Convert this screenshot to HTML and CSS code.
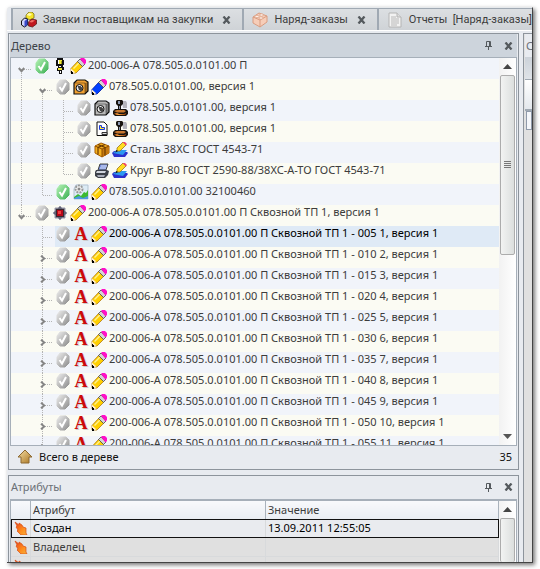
FILE: index.html
```
<!DOCTYPE html>
<html lang="ru">
<head>
<meta charset="utf-8">
<title>Дерево</title>
<link rel="stylesheet" href="styles.css">
</head>
<body>
<svg class="defs" aria-hidden="true">
  <defs>
    <linearGradient id="gGray" x1="0" y1="0" x2="1" y2="1"><stop offset="0" stop-color="#ececec"/><stop offset=".5" stop-color="#bcbcbc"/><stop offset="1" stop-color="#8c8c8c"/></linearGradient>
    <linearGradient id="gGreen" x1="0" y1="0" x2="1" y2="1"><stop offset="0" stop-color="#b4f2b4"/><stop offset="1" stop-color="#3cb054"/></linearGradient>
    <linearGradient id="gUp" x1="0" y1="0" x2="1" y2="1"><stop offset="0" stop-color="#f6dfa6"/><stop offset="1" stop-color="#a87420"/></linearGradient>
    <linearGradient id="gHand" x1="0" y1="0" x2="1" y2="1"><stop offset="0" stop-color="#e8401c"/><stop offset=".6" stop-color="#ff8c1c"/><stop offset="1" stop-color="#f4b040"/></linearGradient>
    <linearGradient id="gBase" x1="0" y1="0" x2="1" y2="0"><stop offset="0" stop-color="#7c3000"/><stop offset=".35" stop-color="#f8a040"/><stop offset="1" stop-color="#8c3800"/></linearGradient>
  </defs>
  <symbol id="ok" viewBox="0 0 16 16"><path d="M5 1h6l3 3v7l-4 4H5l-3-3V5z" fill="url(#gGray)" stroke="url(#gGray)" stroke-linejoin="round"/><path d="M4.500 8l2.500 3.500L11 4" fill="none" stroke="#fff" stroke-width="2"/></symbol>
  <symbol id="okg" viewBox="0 0 16 16"><path d="M5 1h6l3 3v7l-4 4H5l-3-3V5z" fill="url(#gGreen)" stroke="url(#gGreen)" stroke-linejoin="round"/><path d="M4.500 8l2.500 3.500L11 4" fill="none" stroke="#fff" stroke-width="2"/></symbol>
  <symbol id="pen" viewBox="0 0 16 16"><path d="M1 15v-4.500L8 3l5 5-7 7z" fill="#ffd000" stroke="#b07818" stroke-width=".8"/><path d="M3 10l6-6 1 1-6 6z" fill="#fff08c"/><path d="M1 10.500L5.500 14.500 1 15.500z" fill="#ffeccc"/><path d="M1 13h1v1h1v2H1z" fill="#000"/><path d="M7.500 3.500L10 1l5 5-2.500 2.500z" fill="#d4d4d4" stroke="#444" stroke-width=".8"/><path d="M10 1l1-1h3l2 2v3l-1.500 1.500z" fill="#ff10c8"/></symbol>
  <symbol id="penb" viewBox="0 0 16 16"><path d="M1 15v-4.500L8 3l5 5-7 7z" fill="#0040ff" stroke="#0018a0" stroke-width=".8"/><path d="M1 10.500L5.500 14.500 1 15.500z" fill="#ffeccc"/><path d="M1 13h1v1h1v2H1z" fill="#000"/><path d="M7.500 3.500L10 1l5 5-2.500 2.500z" fill="#d4d4d4" stroke="#444" stroke-width=".8"/><path d="M10 1l1-1h3l2 2v3l-1.500 1.500z" fill="#ff10c8"/></symbol>
  <symbol id="lamp" viewBox="0 0 16 16"><path d="M5 0h6v2h1v5h-1v2h1v3h-2v4H7v-3H5v-3h1V8H4V2h1z" fill="#111"/><path d="M6 2h4v4H6zM6 10h4v2H6z" fill="#f0e838"/><path d="M6 2h1v4H6zM7 8h2v1H7zM8 13h1v2H8z" fill="#fff"/><path d="M9 3h1v3H9z" fill="#a09810"/></symbol>
  <symbol id="nut" viewBox="0 0 16 16"><path d="M1 4l3-3h8l3 2v9l-3 3H1z" fill="currentColor" stroke="#111" stroke-width="1.200"/><path d="M12 4l3-1v9l-3 3z" fill="#000" opacity=".3"/><path d="M1.500 4H12v11" fill="none" stroke="#111" stroke-width=".8" opacity=".5"/><circle cx="6.500" cy="9" r="3.500" fill="#eee" stroke="#111"/><path d="M4.500 7h3l2 2v1l-1.500 2-2-1z" fill="#444"/></symbol>
  <symbol id="stamp" viewBox="0 0 16 16"><path d="M10 1h4l1 2v5h-4z" fill="#b4b4bc"/><path d="M5 0h5l1 1v3L9 6v3h5l2 2v3l-2 2H3l-2-2v-3l2-2h3V6L4 4V1z" fill="#181410"/><path d="M6 1h2v3H6zM7 6h1v3H7z" fill="#8c98b0"/><path d="M2 11l3-1h7l2 1-2 1.500H5z" fill="#c87830"/><path d="M2 13h3l2 1h5l2-1v1l-1 1H4z" fill="url(#gBase)"/></symbol>
  <symbol id="doc" viewBox="0 0 16 16"><path d="M3 1h7l3 3v10.500H3z" fill="#fff" stroke="#111"/><path d="M5.500 8.500v-4h2v2h3v2z" fill="#ffe838" stroke="#1838e0"/><path d="M8 11.500h5v2H8z" fill="#ddd" stroke="#333"/></symbol>
  <symbol id="box" viewBox="0 0 16 16"><path d="M1 4l6-3 8 3v7l-7 4-7-4z" fill="#f4b020" stroke="#a85c00"/><path d="M8 7l7-3v7l-7 4z" fill="#c47810"/><path d="M1 4l7 3v8M8 7l7-3" fill="none" stroke="#8c4c00"/><path d="M4 2.500l7 3v8M11 2.500L4 5.500v7" fill="none" stroke="#6c3a00" stroke-width="1.200"/></symbol>
  <symbol id="boat" viewBox="0 0 16 16"><path d="M0 11l2-2 13 1 1 1-3 4H2z" fill="#2c30cc"/><path d="M1 11l4-3h10l-4 5z" fill="#2c98f0"/><path d="M5 9V6l6-6 3 3-6 6z" fill="#ffdc20" stroke="#8a6410" stroke-width=".7"/><path d="M11 0h2l2 2-1 1.500-3-3z" fill="#f04868"/><path d="M4 8l2 1-2.500 1.500z" fill="#111"/></symbol>
  <symbol id="print" viewBox="0 0 16 16"><path d="M6 1h8l-2 6H4z" fill="#7890e0" stroke="#444"/><path d="M7 3h6M6 5h6" stroke="#d8e0f8"/><path d="M2 7h11l2 1-1 4-3 3H4l-3-2V9z" fill="#3c4048"/><path d="M3 8h9l-1 2H2z" fill="#d0d4dc"/><path d="M3 12h8l-1 2H4z" fill="#a8acb8"/></symbol>
  <symbol id="chart" viewBox="0 0 16 16"><path d="M3 1h12v14H1V5z" fill="#dcebf5" stroke="#b4c4d0"/><path d="M1 13l4-3 3 2 3-4 2 1 2-3v9H1z" fill="#3cba30"/><path d="M1 14l5-2 4 2 5-2v3H1z" fill="#4c98e0"/><circle cx="6" cy="5" r="3.500" fill="#f4f4f4" stroke="#999" stroke-width="2" stroke-dasharray="2 1"/><circle cx="6" cy="5" r="1.500" fill="#888"/></symbol>
  <symbol id="proc" viewBox="0 0 16 16"><path d="M8 1l2 2h3v3l2 2-2 2v3h-3l-2 2-2-2H3v-3L1 8l2-2V3h3z" fill="#667" stroke="#99a"/><path d="M4 4h8v8H4z" fill="#382830"/><path d="M5 5h6v6H5z" fill="#b80818"/><path d="M6 6h3v3H6z" fill="#f04040"/></symbol>
  <symbol id="hand" viewBox="0 0 14 14"><path d="M1 1l4 3V2l3 2 1 2 3 1v5l1 2H7L3 10l1-1-2-3 1-1z" fill="url(#gHand)" stroke="#d84c14" stroke-width=".7"/></symbol>
  <symbol id="x" viewBox="0 0 9 8"><path d="M1.500 .5l6 7M7.500 .5l-6 7" stroke="#555a5e" stroke-width="2.300"/></symbol>
  <symbol id="pin" viewBox="0 0 7 9"><path d="M1.500 6V.5h4V6M0 5.500h7M3.500 6v3" fill="none" stroke="#555a5e"/><path d="M4 1h1v5H4z" fill="#555a5e"/></symbol>
  <symbol id="down" viewBox="0 0 7 6"><path d="M.8 1l2.700 3.200L6.200 1" fill="none" stroke="#858585" stroke-width="2"/></symbol>
  <symbol id="right" viewBox="0 0 6 7"><path d="M1 .8l3.200 2.700L1 6.200" fill="none" stroke="#858585" stroke-width="2"/></symbol>
  <symbol id="su" viewBox="0 0 9 5"><path d="M4.500 0L9 5H0z" fill="#444"/></symbol>
  <symbol id="sd" viewBox="0 0 9 5"><path d="M0 0h9L4.500 5z" fill="#555"/></symbol>
</svg>
<main class="window">
  <nav class="tabs">
    <div class="tab"><svg class="ico" viewBox="0 0 16 16"><path d="M5 3l3-3h3l2 2v4L9 8 5 6z" fill="#f4e428" stroke="#6c6010" stroke-width=".7"/><path d="M5.500 3L8 1l3 1-2 2z" fill="#fffab0"/><path d="M.5 9l3-3 3 1v6l-3 2-3-2z" fill="#d0d4fc" stroke="#111"/><path d="M3.500 9l3-2v6l-3 2z" fill="#3848c8"/><path d="M7.500 10l3-3 5 1v4l-4 3-4-1z" fill="#c01820" stroke="#501010" stroke-width=".7"/><path d="M8 10l3-2 3 .5-3 2z" fill="#f07068"/></svg><button class="name">Заявки поставщикам на закупки</button><button class="close" aria-label="Закрыть"><svg class="x"><use href="#x"/></svg></button></div>
    <div class="tab"><svg class="ico" viewBox="0 0 16 16"><path d="M1 5l6-4 8 3v6l-7 5-7-4z" fill="#f6cdb8" stroke="#d99c80"/><path d="M1 5l7 3 7-4M8 8v7" fill="none" stroke="#d99c80"/><ellipse cx="5" cy="4.500" rx="2" ry="1.200" fill="#fff0e8" stroke="#d99c80" stroke-width=".7"/><ellipse cx="9.500" cy="3" rx="2" ry="1.200" fill="#fff0e8" stroke="#d99c80" stroke-width=".7"/><ellipse cx="9" cy="6" rx="2" ry="1.200" fill="#fff0e8" stroke="#d99c80" stroke-width=".7"/></svg><button class="name">Наряд-заказы</button><button class="close" aria-label="Закрыть"><svg class="x"><use href="#x"/></svg></button></div>
    <div class="tab"><svg class="ico" viewBox="0 0 16 16"><path d="M2 1h8l4 4v10H2z" fill="#f2f2f2" stroke="#b4b4b4"/><path d="M10 1v4h4" fill="#ddd" stroke="#b4b4b4"/><path d="M4 5h5M4 7h8M4 9h8M4 11h8M4 13h6" stroke="#b8b8b8"/></svg><button class="name">Отчеты &nbsp;[Наряд-заказы]</button><button class="close" aria-label="Закрыть"><svg class="x"><use href="#x"/></svg></button></div>
  </nav>
  <div class="content">
    <div class="left">
      <section class="panel tree-panel">
        <header class="head active"><h2>Дерево</h2><button aria-label="Закрепить"><svg class="pin"><use href="#pin"/></svg></button><button aria-label="Закрыть"><svg class="x"><use href="#x"/></svg></button></header>
        <div class="view">
          <ul class="tree">
            <li><i class="h s"><svg class="dn"><use href="#down"/></svg></i><svg class="ico"><use href="#okg"/></svg><svg class="ico"><use href="#lamp"/></svg><svg class="ico"><use href="#pen"/></svg><span>200-006-А 078.505.0.0101.00 П</span></li>
            <li><i class="v"></i><i class="h s"><svg class="dn"><use href="#down"/></svg></i><svg class="ico"><use href="#ok"/></svg><svg class="ico gold"><use href="#nut"/></svg><svg class="ico"><use href="#penb"/></svg><span>078.505.0.0101.00, версия 1</span></li>
            <li><i class="v"></i><i class="v"></i><i class="v h"></i><svg class="ico"><use href="#ok"/></svg><svg class="ico gray"><use href="#nut"/></svg><svg class="ico"><use href="#stamp"/></svg><span>078.505.0.0101.00, версия 1</span></li>
            <li><i class="v"></i><i class="v"></i><i class="v h"></i><svg class="ico"><use href="#ok"/></svg><svg class="ico"><use href="#doc"/></svg><svg class="ico"><use href="#stamp"/></svg><span>078.505.0.0101.00, версия 1</span></li>
            <li><i class="v"></i><i class="v"></i><i class="v h"></i><svg class="ico"><use href="#ok"/></svg><svg class="ico"><use href="#box"/></svg><svg class="ico"><use href="#boat"/></svg><span>Сталь 38ХС ГОСТ 4543-71</span></li>
            <li><i class="v"></i><i class="v"></i><i class="e h"></i><svg class="ico"><use href="#ok"/></svg><svg class="ico"><use href="#print"/></svg><svg class="ico"><use href="#boat"/></svg><span>Круг В-80 ГОСТ 2590-88/38ХС-А-ТО ГОСТ 4543-71</span></li>
            <li><i class="v"></i><i class="e h"></i><svg class="ico"><use href="#okg"/></svg><svg class="ico"><use href="#chart"/></svg><svg class="ico"><use href="#pen"/></svg><span>078.505.0.0101.00 32100460</span></li>
            <li><i class="e h"><svg class="dn"><use href="#down"/></svg></i><svg class="ico"><use href="#ok"/></svg><svg class="ico"><use href="#proc"/></svg><svg class="ico"><use href="#pen"/></svg><span>200-006-А 078.505.0.0101.00 П Сквозной ТП 1, версия 1</span></li>
            <li><i></i><i class="v h"></i><div class="item selected"><svg class="ico"><use href="#ok"/></svg><b class="ico letter">A</b><svg class="ico"><use href="#pen"/></svg><span>200-006-А 078.505.0.0101.00 П Сквозной ТП 1 - 005 1, версия 1</span></div></li>
            <li><i></i><i class="v h"><svg class="rt"><use href="#right"/></svg></i><svg class="ico"><use href="#ok"/></svg><b class="ico letter">A</b><svg class="ico"><use href="#pen"/></svg><span>200-006-А 078.505.0.0101.00 П Сквозной ТП 1 - 010 2, версия 1</span></li>
            <li><i></i><i class="v h"><svg class="rt"><use href="#right"/></svg></i><svg class="ico"><use href="#ok"/></svg><b class="ico letter">A</b><svg class="ico"><use href="#pen"/></svg><span>200-006-А 078.505.0.0101.00 П Сквозной ТП 1 - 015 3, версия 1</span></li>
            <li><i></i><i class="v h"><svg class="rt"><use href="#right"/></svg></i><svg class="ico"><use href="#ok"/></svg><b class="ico letter">A</b><svg class="ico"><use href="#pen"/></svg><span>200-006-А 078.505.0.0101.00 П Сквозной ТП 1 - 020 4, версия 1</span></li>
            <li><i></i><i class="v h"><svg class="rt"><use href="#right"/></svg></i><svg class="ico"><use href="#ok"/></svg><b class="ico letter">A</b><svg class="ico"><use href="#pen"/></svg><span>200-006-А 078.505.0.0101.00 П Сквозной ТП 1 - 025 5, версия 1</span></li>
            <li><i></i><i class="v h"><svg class="rt"><use href="#right"/></svg></i><svg class="ico"><use href="#ok"/></svg><b class="ico letter">A</b><svg class="ico"><use href="#pen"/></svg><span>200-006-А 078.505.0.0101.00 П Сквозной ТП 1 - 030 6, версия 1</span></li>
            <li><i></i><i class="v h"><svg class="rt"><use href="#right"/></svg></i><svg class="ico"><use href="#ok"/></svg><b class="ico letter">A</b><svg class="ico"><use href="#pen"/></svg><span>200-006-А 078.505.0.0101.00 П Сквозной ТП 1 - 035 7, версия 1</span></li>
            <li><i></i><i class="v h"><svg class="rt"><use href="#right"/></svg></i><svg class="ico"><use href="#ok"/></svg><b class="ico letter">A</b><svg class="ico"><use href="#pen"/></svg><span>200-006-А 078.505.0.0101.00 П Сквозной ТП 1 - 040 8, версия 1</span></li>
            <li><i></i><i class="v h"><svg class="rt"><use href="#right"/></svg></i><svg class="ico"><use href="#ok"/></svg><b class="ico letter">A</b><svg class="ico"><use href="#pen"/></svg><span>200-006-А 078.505.0.0101.00 П Сквозной ТП 1 - 045 9, версия 1</span></li>
            <li><i></i><i class="v h"><svg class="rt"><use href="#right"/></svg></i><svg class="ico"><use href="#ok"/></svg><b class="ico letter">A</b><svg class="ico"><use href="#pen"/></svg><span>200-006-А 078.505.0.0101.00 П Сквозной ТП 1 - 050 10, версия 1</span></li>
            <li><i></i><i class="v h"><svg class="rt"><use href="#right"/></svg></i><svg class="ico"><use href="#ok"/></svg><b class="ico letter">A</b><svg class="ico"><use href="#pen"/></svg><span>200-006-А 078.505.0.0101.00 П Сквозной ТП 1 - 055 11, версия 1</span></li>
          </ul>
          <div class="scroll"><svg class="tri"><use href="#su"/></svg><div class="track"><div class="thumb"><div class="grip"></div></div></div><svg class="tri"><use href="#sd"/></svg></div>
        </div>
        <footer class="foot"><svg class="ico" viewBox="0 0 16 16"><path d="M8 1l7 7h-3v6H4V8H1z" fill="url(#gUp)" stroke="#8c6830"/></svg><span class="total">Всего в дереве</span><span>35</span></footer>
      </section>
      <section class="panel attr-panel">
        <header class="head"><h2>Атрибуты</h2><button aria-label="Закрепить"><svg class="pin"><use href="#pin"/></svg></button><button aria-label="Закрыть"><svg class="x"><use href="#x"/></svg></button></header>
        <div class="view">
          <table class="attrs">
            <thead><tr><th class="mark"></th><th class="attr">Атрибут</th><th>Значение</th></tr></thead>
            <tbody>
              <tr class="current"><td><svg class="hand"><use href="#hand"/></svg></td><td>Создан</td><td>13.09.2011 12:55:05</td></tr>
              <tr><td><svg class="hand"><use href="#hand"/></svg></td><td>Владелец</td><td></td></tr>
              <tr><td><svg class="hand"><use href="#hand"/></svg></td><td></td><td></td></tr>
            </tbody>
          </table>
          <div class="scroll"><svg class="tri"><use href="#su"/></svg><div class="track"><div class="thumb full"></div></div></div>
        </div>
      </section>
    </div>
    <section class="panel side">
      <header class="head"><h2>С</h2></header>
      <div class="bar"></div>
      <div class="toolbar"></div>
      <div class="field"></div>
    </section>
  </div>
</main>
</body>
</html>
```
FILE: styles.css
```
* { box-sizing: border-box; }
body {
  margin: 0;
  padding: 7px;
  height: 100vh;
  overflow: hidden;
  background: #fff;
  font: 11px/14px "Noto Sans", sans-serif;
  color: #3c3c3c;
}
.defs { position: absolute; width: 0; height: 0; }
button { margin: 0; padding: 0; border: 0; background: none; font: inherit; color: inherit; display: flex; }
svg { flex: none; display: block; }
h2 { margin: 0; font: inherit; }
.ico { width: 16px; height: 16px; flex: none; }
.gold { color: #f0a030; }
.gray { color: #b8b8b8; }
.x { width: 9px; height: 8px; }
.pin { width: 7px; height: 9px; }

.window {
  height: calc(100vh - 13px);
  display: flex;
  flex-direction: column;
  overflow: hidden;
  background: #e8ebf0;
  border-right: 1px solid #444;
  border-bottom: 1px solid #444;
  border-top: 1px solid #e6e9ec;
  border-radius: 3px 0 0 0;
  box-shadow: 2px 2px 4px #777;
}
.tabs { display: flex; flex: none; height: 22px; margin-left: 4px; background: #d3d7db; font-family: Roboto, sans-serif; }
.tab {
  display: flex;
  flex: none;
  align-items: center;
  padding: 0 11px 0 8px;
  border-top: 1px solid #a0a9b3;
  border-left: 2px solid #a0a9b3;
  background: linear-gradient(#dcdfe2, #cfd3d7);
}
.tab .name { margin: 0 9px 0 6px; white-space: nowrap; }
.content { flex: 1; min-height: 0; display: flex; gap: 4px; padding: 2px 0 0 1px; border-top: 1px solid #fff; }
.left { flex: 1; min-width: 0; display: flex; flex-direction: column; gap: 5px; }

.panel { display: flex; flex-direction: column; border: 1px solid #8d949c; padding: 0 1px; background: #e8ebf0; }
.head { display: flex; flex: none; align-items: center; gap: 12px; height: 23px; padding: 0 4px 0 1px; color: #6b7076; }
.head h2 { flex: 1; }
.active { background: #cdd4dc; color: #3c4248; }
.view { flex: 1; min-height: 0; display: flex; overflow: hidden; border: 1px solid #a6afb9; }
.tree-panel { flex: 438 1 0; min-height: 0; }
.attr-panel { flex: 87 1 0; min-height: 0; border-bottom: 0; }

.tree { flex: 1; min-width: 0; margin: 0; padding: 0; list-style: none; overflow: hidden; }
.tree li { display: flex; gap: 2px; height: 21px; white-space: nowrap; background: #f1f4fa; }
.tree li:nth-child(even) { background: #fbfbf3; }
.tree i {
  flex: none;
  display: flex;
  width: 21px;
  height: 21px;
  margin-right: -2px;
  background-repeat: no-repeat;
  --dot: #b4b4b4 0 1px, transparent 1px 2px;
}
.tree i + svg, .tree i + .item { margin-left: 2px; }
.tree .v { background-image: repeating-linear-gradient(var(--dot)); background-size: 1px 100%; background-position: 10px 0; }
.tree .v.h, .tree .e.h, .tree .s.h {
  background-image: repeating-linear-gradient(90deg, var(--dot)), repeating-linear-gradient(var(--dot));
  background-size: 10px 1px, 1px 100%;
  background-position: 11px 11px, 10px 0;
}
.tree .e.h { background-size: 10px 1px, 1px 11px; }
.tree .s.h { background-position: 11px 11px, 10px 11px; }
.dn { width: 7px; height: 6px; margin: 9px 0 0 7px; }
.rt { width: 6px; height: 7px; margin: 8px 0 0 8px; }
.item { flex: 1; display: flex; gap: 2px; }
.selected { background: #dfeaf6; color: #000; }
.letter { font: bold 18px/16px "Liberation Serif", serif; text-align: center; color: #cc0a0a; text-shadow: 1px 1px 0 #ccc; }

.scroll { flex: none; width: 17px; display: flex; flex-direction: column; align-items: center; background: linear-gradient(90deg, #f2f2f2, #fff); }
.tri { width: 9px; height: 5px; margin: 6px 0; }
.track { flex: 1; min-height: 0; width: 15px; }
.thumb { height: 51%; display: flex; align-items: center; justify-content: center; border: 1px solid #acacac; border-radius: 2px; background: linear-gradient(90deg, #f2f3f2, #dcdfde); }
.thumb.full { height: 100%; border-bottom: 0; }
.grip { width: 7px; height: 7px; background: repeating-linear-gradient(#777 0 1px, transparent 1px 2px); }

.foot { display: flex; flex: none; align-items: center; height: 23px; padding: 0 5px 0 7px; color: #111; }
.total { flex: 1; margin-left: 6px; }

.attr-panel .view { border-width: 2px 1px 0; background: #e0e0e0; }
.attrs { flex: 1; align-self: flex-start; border-collapse: collapse; table-layout: fixed; }
.attrs th { height: 18px; padding: 0 2px; text-align: left; font-weight: normal; border-right: 1px solid #a9b2bc; background: linear-gradient(#f8f9fc, #e9edf3); }
.attrs td { height: 19px; padding: 0 2px; border: solid #d8dadc; border-width: 0 1px 1px 0; }
.attrs .mark { width: 19px; }
.attr { width: 235px; }
.current { outline: 1px solid #111; outline-offset: -1px; background: #e9ebef; color: #000; }
.hand { width: 14px; height: 14px; margin-left: 1px; }

.side { flex: none; width: 9px; border-right: 0; border-bottom: 0; padding: 0 0 0 1px; overflow: hidden; background: #e0e0e0; }
.side .head { background: #e8ebf0; }
.bar { height: 23px; background: linear-gradient(#ccd2d9, #dfe3e8); border-bottom: 1px solid #a0a9b3; }
.toolbar { height: 31px; background: linear-gradient(#fff, #e4e8ed); border-bottom: 2px solid #a0a9b3; }
.field { height: 19px; margin-left: 1px; background: #f4f6fa; border: 1px solid #8f9aaa; }
```
